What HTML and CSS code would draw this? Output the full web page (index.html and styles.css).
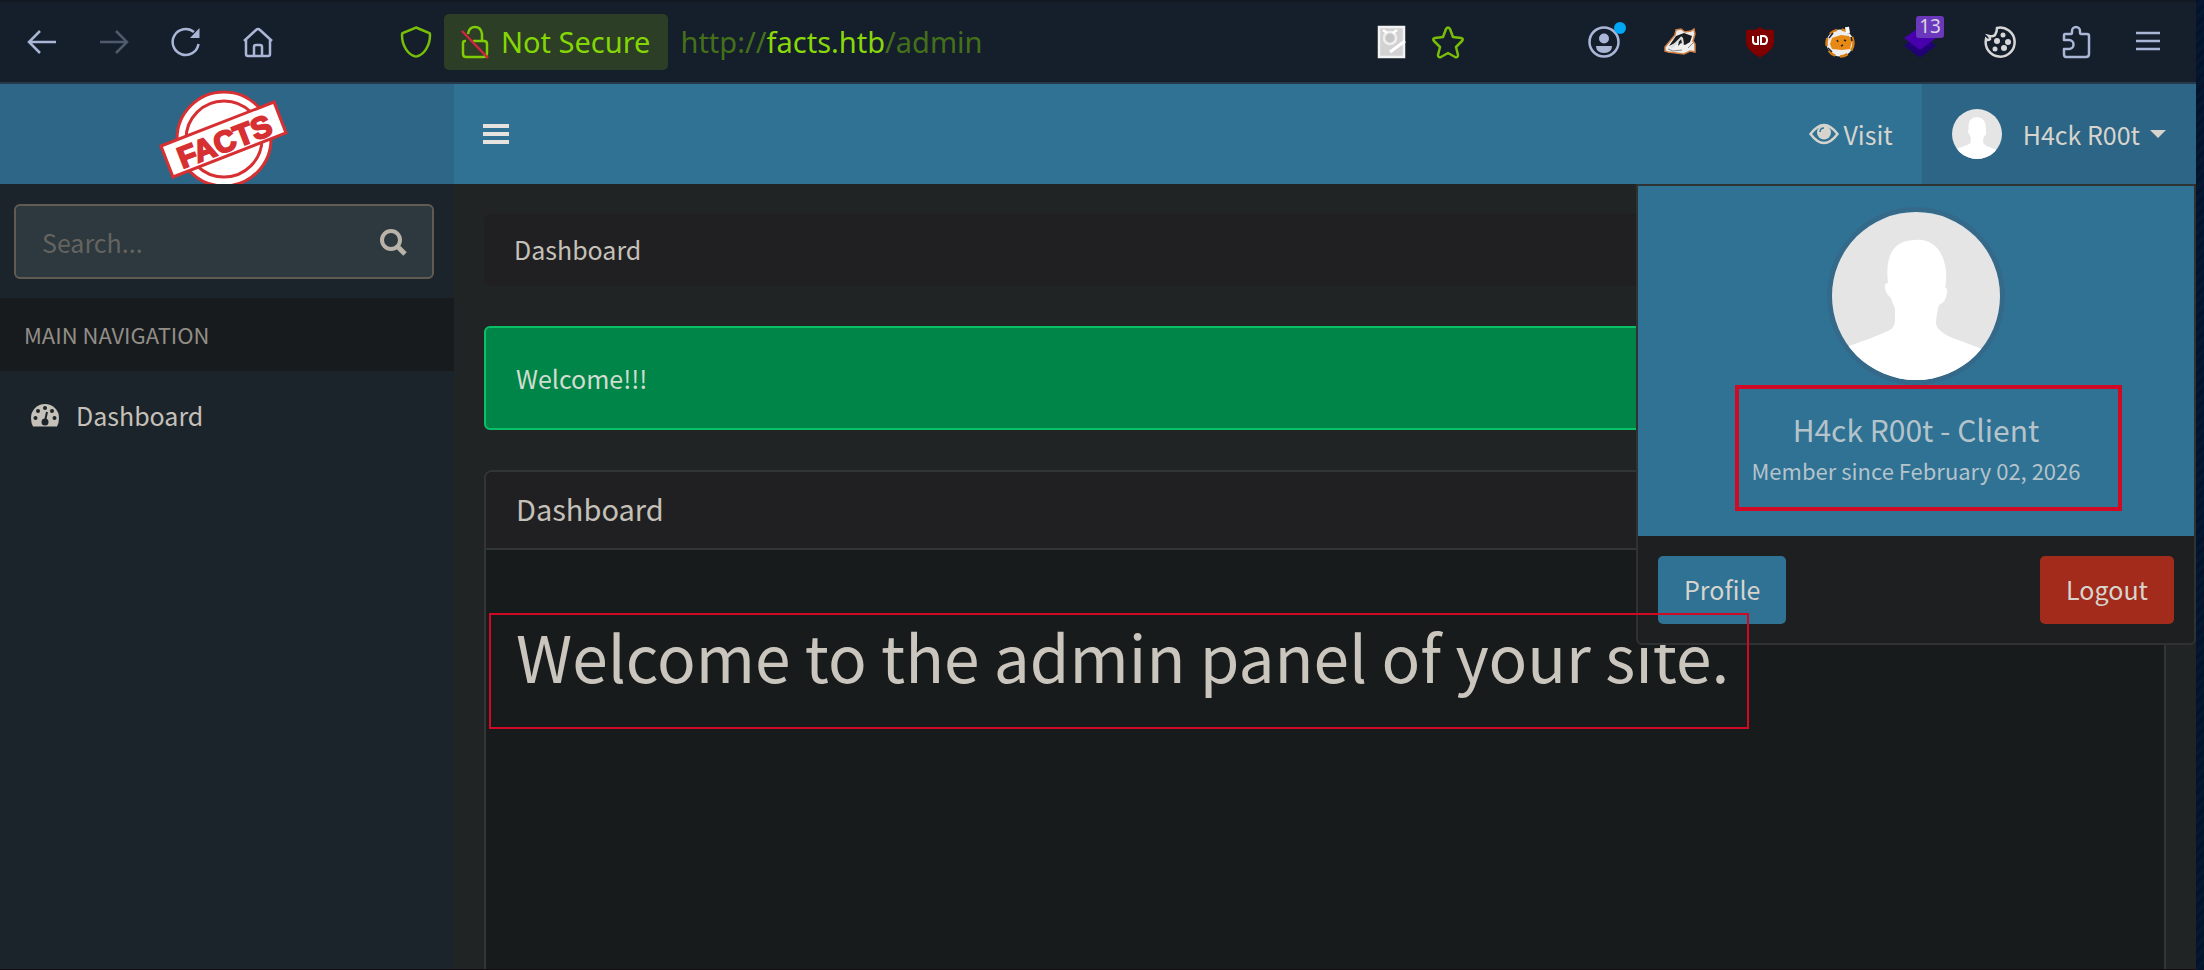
FILE: index.html
```html
<!DOCTYPE html>
<html lang="en">
<head>
<meta charset="utf-8">
<title>Dashboard</title>
<link rel="stylesheet" href="styles.css">
</head>
<body>
<svg class="defs" aria-hidden="true">
  <symbol id="person" viewBox="0 0 168 168">
    <rect width="168" height="168" fill="#e5e5e5"/>
    <path fill="#fff" d="M0 168V142C12 134 38 128 58 118Q63 115 63 108V96Q60 91 59 86Q54 82 53 76Q52 71 56 71C53 45 60 29 82 28C104 25 116 45 114 70Q114 72 113 75Q116 76 115 81Q114 90 107 93Q104 104 104 112Q105 118 116 124C132 131 146 134 152 139L168 150V168Z"/>
  </symbol>
</svg>
<div class="window">
  <header class="toolbar">
    <nav class="history" aria-label="Browser">
      <button class="tool" aria-label="Back"><svg viewBox="0 0 32 32"><path d="M30 16H3M14 5 3 16l11 11"/></svg></button>
      <button class="tool tool-off" aria-label="Forward" disabled><svg viewBox="0 0 32 32"><path d="M2 16h27M18 5l11 11-11 11"/></svg></button>
      <button class="tool" aria-label="Reload"><svg viewBox="0 0 32 32"><path d="M28.500 18A13 13 0 1 1 24 6"/><path class="solid" d="M29.500 2v10H20z"/></svg></button>
      <button class="tool" aria-label="Home"><svg viewBox="0 0 32 32"><path d="M2 15 14 4q2-2 4 0l12 11M4 13v15q0 2 2 2h20q2 0 2-2V13M12 30v-9q0-2 2-2h4q2 0 2 2v9"/></svg></button>
    </nav>
    <div class="address">
      <button class="tool lime" aria-label="Protection"><svg viewBox="0 0 32 32"><path d="M16 1.500 29 7q1 0 1 2c0 11-6 19-12 21q-2 1-4 0C8 28 2 20 2 9q0-2 1-2z"/></svg></button>
      <button class="insecure"><svg viewBox="0 0 28 34" aria-hidden="true"><path d="M7 9q1-7 7-7t7 7v7M5 16H4q-2 0-2 2v11q0 3 3 3h17q4 0 4-4V19q0-3-3-3H12" fill="none" stroke="#80cc05" stroke-width="2.500"/><path d="M1 6l26 27" stroke="#d32540" stroke-width="2.500"/></svg>Not Secure</button>
      <span class="url">http://<b>facts.htb</b>/admin</span>
    </div>
    <div class="page-tools">
      <button class="tool" aria-label="Reader"><svg viewBox="0 0 32 32"><rect x="3" y="1" width="25" height="30" fill="#d2d2d2" stroke="#f2f2f2"/><circle cx="14" cy="12" r="6" fill="#c6c6c6" stroke="#efefef"/><path d="M14 26l15-11" stroke="#fff" stroke-width="3"/><path d="M7 4l4 3M21 4l-4 3" stroke="#fff"/></svg></button>
      <button class="tool lime" aria-label="Bookmark"><svg viewBox="0 0 32 32"><path stroke-linejoin="round" d="M14 3q2-3 4 0l3 8 8 1q3 1 1 3l-6 6 2 8q0 3-3 2l-7-4-7 4q-3 1-3-2l2-8-6-6q-2-2 1-3l8-1z"/></svg></button>
    </div>
    <div class="extensions">
      <button class="tool" aria-label="Account"><svg viewBox="0 0 32 32"><circle cx="16" cy="16" r="14.500"/><circle class="solid" cx="16" cy="12.500" r="5"/><path class="solid" d="M8 20h16q0 7-8 7t-8-7z"/><circle cx="32" cy="2" r="6" fill="#00a8f5" stroke="none"/></svg></button>
      <div class="addons">
        <button class="tool" aria-label="Privacy Badger"><svg viewBox="0 0 32 32"><path d="M1 21 11 9 12 4 17 3 21 6 27 5 30 3 31 8 29 15 31 18 31 26 26 25 20 28 4 26 1 25z" fill="#eee" stroke="#ce8046" stroke-width="1.500"/><path d="M5 20 12 10 20 7 28 10 26 16 21 19 17 17 14 20 15 15z" fill="#191d20" stroke="none"/><path d="M7 22 18 11M19 18l-1-6" fill="none" stroke="#ddd" stroke-width="2"/><path d="M4 23l5 2 9-1M24 22l5-5" fill="none" stroke="#8a8a8a" stroke-width="1"/></svg></button>
        <button class="tool" aria-label="uBlock"><svg viewBox="0 0 32 32"><path d="M16 1 20 3.500 30 4v13Q29 25 16 31.500 3 25 2 17V4l10-.5z" fill="#800000" stroke="none"/><path d="M9 10v5q0 3 3 3h2v-8M19 10h-2v8h3q3 0 3-4t-4-4z" stroke="#fff" stroke-width="2"/></svg></button>
        <button class="tool" aria-label="Cookie editor"><svg viewBox="0 0 32 32"><circle cx="16" cy="17" r="13.500" fill="#eee" stroke="#d97f14" stroke-dasharray="8 5"/><path d="M6 18 8 12 17 9 25 10 28 15 26 23 18 24 8 23z" fill="#e88913" stroke="none"/><path d="M13 14l1 2M20 14l2 1M17 20l2-1M5 12l4-5M4 22l4 4M27 11l1 4" stroke="#22252a" stroke-width="1.500"/><path d="M23 1l1 6" stroke="#fff" stroke-width="4"/></svg></button>
        <button class="tool" aria-label="Wappalyzer"><svg viewBox="0 0 32 32"><path d="M0 19.500 16 31.500 32 19.500 16 9z" fill="#220078" stroke="none"/><path d="M0 12 16 24 32 12 16 1z" fill="#4800ac" stroke="none"/></svg><span class="count">13</span></button>
        <button class="tool pale" aria-label="Cookies"><svg viewBox="0 0 32 32"><path d="M13 2a14.500 14.500 0 1 1-11 11q2 2 4 0 0-2-1-3 4 1 6-1 2-3 2-7z"/><g fill="#d7d7d7" stroke="none"><circle cx="19" cy="9" r="2.500"/><circle cx="13" cy="15" r="3"/><circle cx="24" cy="16" r="3"/><circle cx="11" cy="23" r="2.500"/><circle cx="20" cy="22" r="3"/></g></svg></button>
      </div>
      <button class="tool" aria-label="Extensions"><svg viewBox="0 0 32 32"><path stroke-linejoin="round" d="M5 8h6q1 0 1-2V5a4 4 0 0 1 8 0v1q0 2 1 2h6q2 0 2 2v18q0 3-3 3H6q-2 0-2-3v-5h5a4.500 4.500 0 0 0 0-9H4v-4q0-2 1-2z"/></svg></button>
      <button class="tool tool-menu" aria-label="Menu"><svg viewBox="0 0 24 32"><path d="M0 7h24M0 15h24M0 23h24"/></svg></button>
    </div>
  </header>

  <div class="site">
    <header class="topbar">
      <a class="logo" href="#" aria-label="Facts">
        <svg viewBox="0 0 130 97">
          <g fill="#fff" stroke="#d63032" stroke-width="3"><circle cx="65" cy="52" r="47"/><circle cx="65" cy="52" r="38"/>
          <path d="M2 59 115 15 127 46 14 90z"/></g>
          <text x="65" y="65" transform="rotate(-21 65 53)">FACTS</text>
        </svg>
      </a>
      <nav class="navbar" aria-label="Site">
        <button class="bars" aria-label="Toggle sidebar"><svg viewBox="0 0 26 22"><path d="M0 3h26M0 11h26M0 19h26"/></svg></button>
        <a class="visit" href="#"><svg viewBox="0 0 30 22" aria-hidden="true"><path d="M1.500 11Q15-7 28.500 11 15 29 1.500 11z" fill="none" stroke="#d7d4ce" stroke-width="2.500"/><circle cx="15" cy="9.500" r="7" fill="#d7d4ce"/><path d="M11 9q0-4 4-4" fill="none" stroke="#2f7294" stroke-width="1.500"/></svg>Visit</a>
        <div class="user">
          <button class="user-toggle"><svg class="face" aria-hidden="true"><use href="#person"/></svg><span>H4ck R00t</span><i class="caret"></i></button>
          <section class="user-menu">
            <div class="user-card">
              <svg class="portrait" aria-hidden="true"><use href="#person"/></svg>
              <div class="member"><p class="name">H4ck R00t - Client</p><p class="since">Member since February 02, 2026</p></div>
            </div>
            <footer class="user-actions"><a class="btn" href="#">Profile</a><a class="btn btn-danger" href="#">Logout</a></footer>
          </section>
        </div>
      </nav>
    </header>
    <aside class="sidebar">
      <form class="search">
        <input type="text" placeholder="Search..." aria-label="Search">
        <button type="button" aria-label="Search"><svg viewBox="0 0 28 28"><circle cx="12" cy="12" r="9" fill="none" stroke-width="4"/><path d="M18 18l8 8" stroke-width="5"/></svg></button>
      </form>
      <h2 class="side-title">MAIN NAVIGATION</h2>
      <a class="side-link" href="#"><svg viewBox="0 0 30 24" aria-hidden="true"><path fill="#c5c0b8" d="M3 23.500Q1 20 1 15a14 14 0 0 1 28 0q0 5-2 8.500z"/><g fill="#1c242b"><circle cx="5.500" cy="15" r="2"/><circle cx="8" cy="8" r="2"/><circle cx="15" cy="5" r="2"/><circle cx="22" cy="8" r="2"/><circle cx="24.500" cy="15" r="2"/><circle cx="15" cy="19" r="3.500"/></g><path d="M15 18l2-9" stroke="#1c242b" stroke-width="2"/></svg>Dashboard</a>
    </aside>
    <main class="content">
      <nav class="crumbs" aria-label="Breadcrumb">Dashboard</nav>
      <div class="alert" role="status">Welcome!!!</div>
      <section class="panel">
        <h2 class="panel-title">Dashboard</h2>
        <div class="panel-body"><h1 class="headline">Welcome to the admin panel of your site.</h1></div>
      </section>
    </main>
  </div>
</div>
</body>
</html>
```
FILE: styles.css
```css
* { box-sizing: border-box; }
body {
  margin: 0;
  padding-right: 8px;
  background: repeating-linear-gradient(135deg, #03132b 0 4px, #051830 4px 8px);
  color: #c5c0b8;
  font: 25px/36px "Noto Sans CJK SC", "Noto Sans", sans-serif;
}
h1, h2, p { margin: 0; font-weight: 400; }
a { color: inherit; text-decoration: none; }
button { padding: 0; border: 0; background: none; color: inherit; font: inherit; }
.defs { position: absolute; width: 0; height: 0; }
.window { display: flex; flex-direction: column; height: 100vh; overflow: hidden; border-bottom: 1px solid #160d13; }

/* browser toolbar */
.toolbar {
  display: flex;
  align-items: center;
  flex: none;
  height: 84px;
  padding: 0 36px 0 26px;
  border-top: 2px solid #121922;
  border-bottom: 2px solid #263a4b;
  background: #151e2b;
}
.tool { position: relative; flex: none; display: block; width: 32px; height: 32px; color: #aab6d6; }
.tool svg { display: block; width: 100%; height: 100%; overflow: visible; fill: none; stroke: currentColor; stroke-width: 2.5; }
.tool .solid { fill: currentColor; stroke: none; }
.tool-off { color: #4f5b6c; }
.tool-menu { width: 24px; }
.lime { color: #78bd08; }
.pale { color: #d7d7d7; }
.history { display: flex; gap: 40px; }
.address { display: flex; align-items: center; flex: 1; margin-left: 126px; font: 29px/40px "Noto Sans", sans-serif; }
.insecure {
  display: flex;
  align-items: center;
  gap: 12px;
  height: 56px;
  margin: 0 12px;
  padding: 0 18px 0 17px;
  border-radius: 5px;
  background: #2c3e25;
  color: #84d605;
}
.insecure svg { width: 28px; height: 34px; }
.url { color: #44701a; }
.url b { color: #88d80a; font-weight: 400; }
.page-tools { display: flex; gap: 24px; }
.extensions { display: flex; gap: 44px; margin-left: 124px; }
.addons { display: flex; gap: 48px; }
.count {
  position: absolute;
  top: -10px;
  left: 12px;
  width: 28px;
  height: 22px;
  border-radius: 3px;
  background: #6c38bb;
  color: #d9d4e8;
  font: 19px/20px "Noto Sans", sans-serif;
}

/* site frame */
.site { display: grid; flex: 1; grid-template: 100px 1fr / 454px 1fr; min-height: 0; background: #202425; }
.topbar { display: grid; grid-column: 1 / 3; grid-template-columns: 454px 1fr; }
.logo { display: flex; justify-content: center; overflow: hidden; padding-top: 3px; background: #2d6686; }
.logo svg { width: 130px; height: 97px; margin-right: 6px; overflow: visible; }
.logo text { fill: #d63032; stroke: #d63032; stroke-width: 2; font: 900 30px "Liberation Sans", sans-serif; text-anchor: middle; }
.navbar { display: flex; align-items: center; background: #2f7294; color: #d7d4ce; }
.bars { margin: 0 auto 0 29px; }
.bars svg { display: block; width: 26px; height: 22px; stroke: #e6e3df; stroke-width: 4; }
.visit { display: flex; align-items: center; gap: 4px; padding-right: 29px; }
.visit svg { width: 30px; height: 22px; }
.user { position: relative; align-self: stretch; }
.user-toggle { display: flex; align-items: center; height: 100%; padding: 0 30px; background: #2c6585; }
.face { width: 50px; height: 50px; margin-right: 21px; border-radius: 50%; }
.caret { margin-left: 10px; border: 8px solid transparent; border-top-color: #d7d4ce; border-bottom: 0; }

/* user menu */
.user-menu {
  position: absolute;
  top: 100%;
  right: 0;
  z-index: 1;
  width: 560px;
  border: 2px solid #2f3233;
  border-radius: 0 0 6px 6px;
  background: #1e1f21;
}
.user-card { display: flex; flex-direction: column; align-items: center; padding: 21px 0 25px; background: #2f7294; }
.portrait { width: 178px; height: 178px; border: 5px solid #35698a; border-radius: 50%; }
.member { width: 387px; height: 126px; margin-left: 24px; padding: 18px 24px 0 0; border: 4px solid #d00a25; color: #b5c3cb; text-align: center; }
.name { font-size: 30px; line-height: 44px; }
.since { font-size: 22px; line-height: 38px; }
.user-actions { display: flex; justify-content: space-between; padding: 20px 20px 19px; }
.btn { padding: 15px 26px 17px; border-radius: 5px; background: #2f7294; color: #d7d4ce; }
.btn-danger { background: #a32b1b; }

/* sidebar */
.sidebar { background: #1c242b; }
.search { display: flex; height: 75px; margin: 20px 20px 19px 14px; border: 2px solid #605c54; border-radius: 6px; background: #2d383f; }
.search input { flex: 1; min-width: 0; padding: 0 26px; border: 0; background: none; color: inherit; font: inherit; }
.search input::placeholder { color: #65645f; opacity: 1; }
.search button { width: 78px; }
.search svg { display: block; width: 28px; height: 28px; margin: auto; stroke: #b9b3aa; }
.side-title { padding: 18px 24px 19px; background: #171b1e; color: #928e87; font-size: 22px; line-height: 36px; }
.side-link { display: flex; align-items: center; gap: 16px; padding: 26px 30px; }
.side-link svg { width: 30px; height: 24px; }

/* content */
.content { display: flex; flex-direction: column; min-height: 0; padding: 30px 30px 0; }
.crumbs { padding: 17px 30px 19px; border-radius: 8px; background: #202022; }
.alert { margin: 40px 0; padding: 32px 30px; border: 2px solid #0abf65; border-radius: 6px; background: #008548; color: #d2dccf; }
.panel { flex: 1; border: 2px solid #323536; border-bottom: 0; border-radius: 8px 8px 0 0; background: #171b1b; }
.panel-title { padding: 16px 30px 20px; border-bottom: 2px solid #323536; border-radius: 6px 6px 0 0; background: #202022; font-size: 29px; line-height: 40px; }
.panel-body { padding: 63px 3px; }
.headline { position: relative; width: fit-content; padding: 2px 20px 34px 27px; font-size: 64px; line-height: 80px; color: #cac5bd; }

/* the outline stays above the open user menu */
.headline::after { content: ""; position: absolute; inset: 0; z-index: 2; border: 2px solid #d00a25; pointer-events: none; }
```
